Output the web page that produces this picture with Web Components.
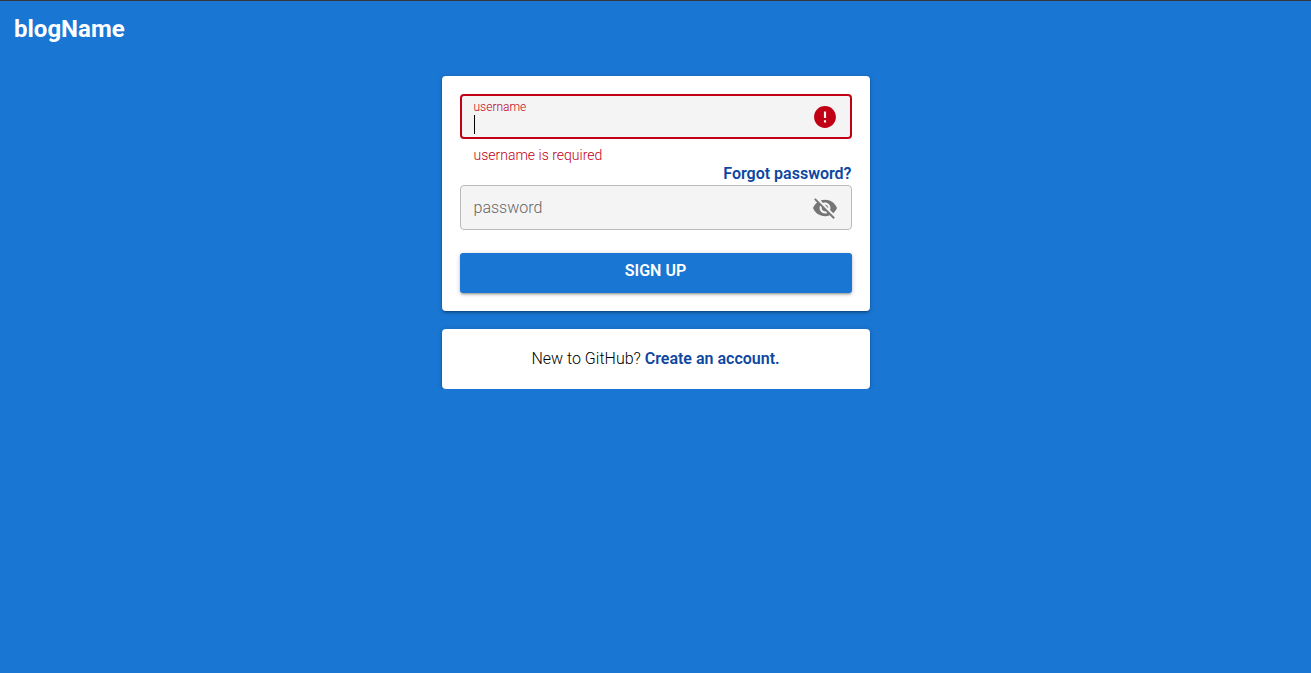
<!DOCTYPE html>
<html lang="en">
<head>
<meta charset="utf-8">
<meta name="viewport" content="width=device-width, initial-scale=1">
<title>blogName</title>
<style>
  html { background: #1976d2; }
  body {
    margin: 0;
    font: 16px/24px Roboto, "Liberation Sans", sans-serif;
    color: #1d1d1d;
    --primary: #1976d2;
    --negative: #c10015;
    --link: #0d47a1;
    --shadow: 0 1px 5px rgba(0,0,0,.2), 0 2px 2px rgba(0,0,0,.14), 0 3px 1px -2px rgba(0,0,0,.12);
  }
</style>
</head>
<body>
<login-page></login-page>
<script>
class BaseElement extends HTMLElement {
  constructor() {
    super();
    const t = document.createElement('template');
    t.innerHTML = this.render();
    this.attachShadow({ mode: 'open' }).append(t.content.cloneNode(true));
  }
}

customElements.define('site-header', class extends BaseElement {
  render() {
    return `<style>
      :host { display: block; border-top: 1px solid #35363a; padding: 12px 14px; }
      h1 { margin: 0; font-size: 24px; line-height: 32px; font-weight: 700; color: #fff; }
    </style>
    <header><h1><slot></slot></h1></header>`;
  }
});

customElements.define('page-card', class extends BaseElement {
  render() {
    return `<style>
      :host { display: block; padding: 18px; background: #fff; border-radius: 4px; box-shadow: var(--shadow); }
    </style><slot></slot>`;
  }
});

customElements.define('text-link', class extends BaseElement {
  render() {
    return `<style>
      :host { display: inline; }
      a { color: var(--link); font-weight: 600; text-decoration: none; }
    </style><a href="#"><slot></slot></a>`;
  }
});

customElements.define('action-button', class extends BaseElement {
  render() {
    return `<style>
      :host { display: block; }
      button { display: block; width: 100%; height: 40px; border: 0; border-radius: 3px; padding: 0 16px 5px;
        background: var(--primary); color: #fff; font: inherit; font-weight: 600;
        box-shadow: var(--shadow); cursor: pointer; }
    </style><button type="submit"><slot></slot></button>`;
  }
});

customElements.define('user-field', class extends BaseElement {
  render() {
    return `<style>
      :host { display: block; color: var(--negative); }
      .control { display: flex; align-items: center; box-sizing: border-box; height: 45px; padding: 0 13px 0 12px;
        border: 2px solid var(--negative); border-radius: 4px; background: #f4f4f4; }
      .text { flex: 1; min-width: 0; }
      label { display: block; font-size: 12px; line-height: 16px; font-weight: 300; }
      .entry { display: flex; align-items: flex-start; height: 20px; }
      .caret { width: 1px; height: 19px; background: #000; }
      input { flex: 1; min-width: 0; height: 20px; padding: 0; border: 0; outline: 0; background: none; font: inherit; color: #1d1d1d; }
      svg { width: 24px; height: 24px; fill: currentColor; }
      .error { margin: 0; padding: 8px 14px 0; font-size: 14px; line-height: 16px; font-weight: 300; }
    </style>
    <div class="control">
      <div class="text">
        <label for="username">username</label>
        <div class="entry"><span class="caret"></span><input id="username" type="text" aria-invalid="true" aria-describedby="error"></div>
      </div>
      <svg viewBox="1 1 22 22" aria-hidden="true"><path d="M12 2C6.48 2 2 6.48 2 12s4.480 10 10 10 10-4.480 10-10S17.520 2 12 2zm1 15h-2v-2h2v2zm0-4h-2V7h2v6z"/></svg>
    </div>
    <p class="error" id="error">username is required</p>`;
  }
});

customElements.define('password-field', class extends BaseElement {
  render() {
    return `<style>
      :host { display: block; }
      .control { display: flex; align-items: center; box-sizing: border-box; height: 45px; padding: 0 14px 0 13px;
        border: 1px solid #bbb; border-radius: 4px; background: #f4f4f4; }
      .text { flex: 1; min-width: 0; display: grid; align-items: center; }
      label, input { grid-area: 1 / 1; }
      label { color: #666; font-weight: 300; pointer-events: none; }
      input { min-width: 0; height: 24px; padding: 0; border: 0; outline: 0; background: none; font: inherit; color: #1d1d1d; }
      button { display: block; padding: 0; border: 0; background: none; color: #757575; cursor: pointer; }
      svg { display: block; width: 24px; height: 24px; fill: currentColor; }
    </style>
    <div class="control">
      <div class="text"><input id="password" type="password"><label for="password">password</label></div>
      <button type="button" aria-label="Show password"><svg viewBox="1 1 22 22" aria-hidden="true"><path d="M12 7c2.760 0 5 2.240 5 5 0 .65-.13 1.260-.36 1.830l2.920 2.920c1.510-1.260 2.700-2.890 3.430-4.750-1.730-4.390-6-7.500-11-7.500-1.400 0-2.740.25-3.980.7l2.160 2.160C10.740 7.130 11.350 7 12 7zM2 4.270l2.280 2.280.46.46C3.080 8.300 1.780 10.020 1 12c1.730 4.390 6 7.500 11 7.500 1.550 0 3.030-.3 4.380-.84l.42.42L19.730 22 21 20.730 3.270 3 2 4.270zM7.530 9.800l1.550 1.550c-.05.21-.08.43-.08.65 0 1.660 1.340 3 3 3 .22 0 .44-.03.65-.08l1.550 1.550c-.67.33-1.410.53-2.200.53-2.760 0-5-2.240-5-5 0-.79.2-1.530.53-2.200zm4.310-.78l3.150 3.150.02-.16c0-1.660-1.340-3-3-3l-.17.01z"/></svg></button>
    </div>`;
  }
});

customElements.define('login-page', class extends BaseElement {
  render() {
    return `<style>
      :host { display: block; }
      main { display: grid; gap: 18px; width: 100%; max-width: 428px; margin: 19px auto 0; }
      form { display: flex; flex-direction: column; margin: 0; }
      .forgot { text-align: right; line-height: 22px; }
      action-button { margin-top: 23px; }
      .join { margin: 0; text-align: center; font-weight: 300; color: #000; }
    </style>
    <site-header>blogName</site-header>
    <main>
      <page-card><form>
        <user-field></user-field>
        <div class="forgot"><text-link>Forgot password?</text-link></div>
        <password-field></password-field>
        <action-button>SIGN UP</action-button>
      </form></page-card>
      <page-card><p class="join">New to GitHub? <text-link>Create an account.</text-link></p></page-card>
    </main>`;
  }
});
</script>
</body>
</html>
